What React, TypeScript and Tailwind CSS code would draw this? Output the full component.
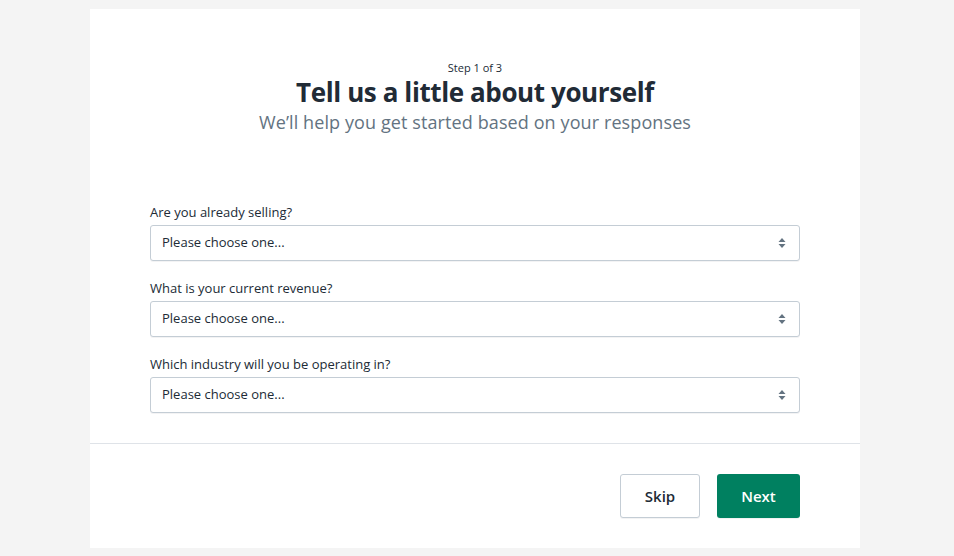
import React from 'react';

const questions = [
  'Are you already selling?',
  'What is your current revenue?',
  'Which industry will you be operating in?',
];

const SelectArrow = () => (
  <svg width="8" height="12" viewBox="0 0 8 12" className="pointer-events-none absolute right-[14px] top-1/2 -translate-y-1/2">
    <path d="M4 1 L7.5 5 H0.5 Z" fill="#637381" />
    <path d="M4 11 L7.5 7 H0.5 Z" fill="#637381" />
  </svg>
);

export default function App() {
  return (
    <div
      className="min-h-screen bg-[#f4f4f4] flex pl-[90px] pt-[9px] pb-[8px]"
      style={{ fontFamily: '"Open Sans", "Noto Sans", sans-serif' }}
    >
      <div className="w-[770px] bg-white flex flex-col">
        <div className="px-[60px] pt-[51px] pb-[30px]">
          <div className="text-center">
            <div className="text-[11px] leading-[16px] text-[#212b36]">Step 1 of 3</div>
            <h1 className="text-[26px] leading-[32px] font-bold text-[#212b36] tracking-[-0.4px]">
              Tell us a little about yourself
            </h1>
            <p className="text-[18px] leading-[26px] text-[#637381] mt-[1px] tracking-[0.1px]">
              We’ll help you get started based on your responses
            </p>
          </div>

          <div className="mt-[67px] flex flex-col gap-[17px]">
            {questions.map((q) => (
              <div key={q}>
                <label className="block text-[13px] leading-[20px] text-[#212b36] mb-[3px]">{q}</label>
                <div className="relative">
                  <select
                    className="appearance-none w-full h-[36px] rounded-[3px] border border-[#c4cdd5] bg-white pl-[11px] pr-8 text-[13px] text-[#212b36] shadow-[0_1px_0_rgba(22,29,37,0.05)] outline-none"
                    style={{ fontFamily: 'inherit' }}
                    defaultValue=""
                  >
                    <option value="">Please choose one...</option>
                  </select>
                  <SelectArrow />
                </div>
              </div>
            ))}
          </div>
        </div>

        <div className="border-t border-[#dfe3e8] flex justify-end gap-[17px] px-[60px] pt-[30px] pb-[30px]">
          <button className="w-[80px] h-[44px] rounded-[3px] border border-[#c4cdd5] bg-white text-[15px] font-semibold text-[#212b36] shadow-[0_1px_0_rgba(22,29,37,0.05)]">
            Skip
          </button>
          <button className="w-[83px] h-[44px] rounded-[3px] bg-[#008060] text-[15px] font-semibold text-white shadow-[0_1px_0_rgba(0,0,0,0.05)]">
            Next
          </button>
        </div>
      </div>
    </div>
  );
}
